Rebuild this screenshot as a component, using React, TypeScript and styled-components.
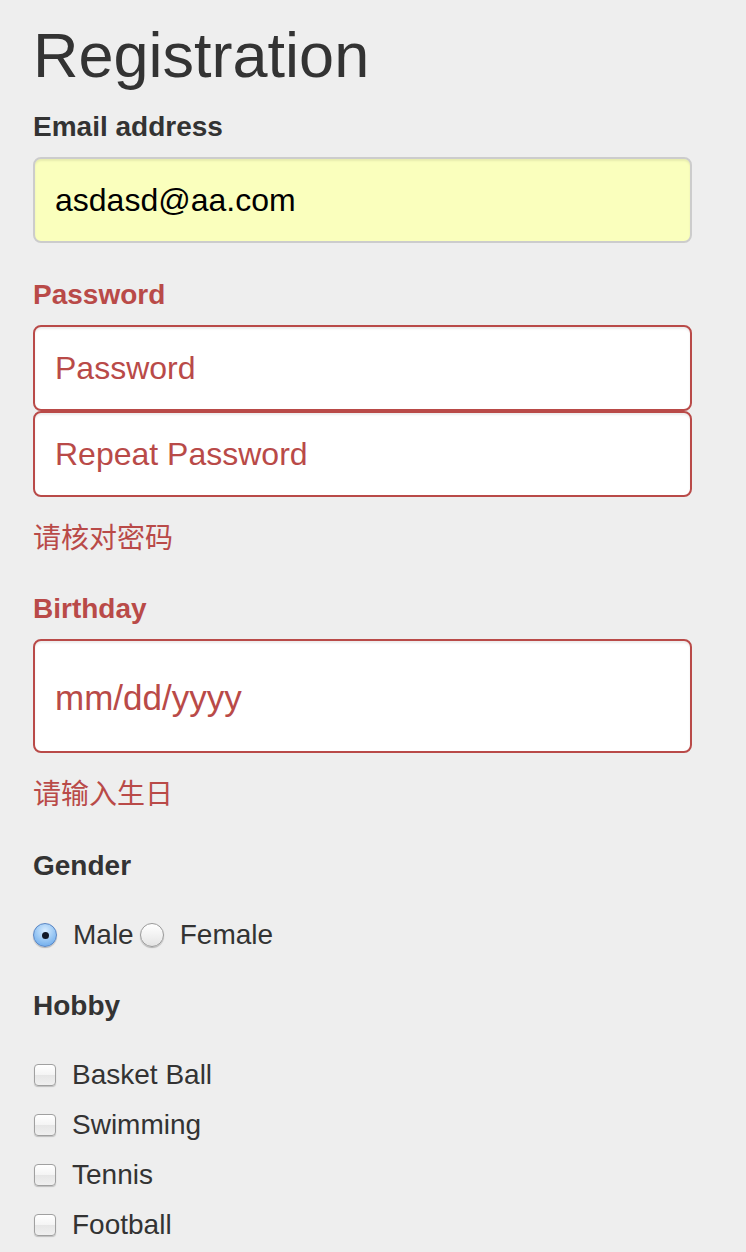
import React from "react";
import styled, { createGlobalStyle } from "styled-components";

const GlobalStyle = createGlobalStyle`
  html, body {
    margin: 0;
    padding: 0;
    background: #eeeeee;
  }
  body {
    font-family: "Liberation Sans", Arial, "Noto Sans CJK SC", sans-serif;
    color: #333333;
  }
  * { box-sizing: border-box; }
`;

const ERR = "#b94a48";

const Page = styled.div`
  width: 659px;
  margin-left: 33px;
  padding-bottom: 20px;
`;

const Title = styled.h1`
  margin: 21px 0 18px;
  font-size: 63px;
  line-height: 68px;
  font-weight: 400;
  color: #333333;
`;

const Group = styled.div<{ $gap?: number }>`
  margin-bottom: ${(p) => (p.$gap ?? 32)}px;
`;

const Label = styled.label<{ $error?: boolean; $mb?: number }>`
  display: block;
  font-size: 28px;
  line-height: 40px;
  font-weight: 700;
  color: ${(p) => (p.$error ? ERR : "#333333")};
  margin-bottom: ${(p) => (p.$mb ?? 10)}px;
`;

const TextInput = styled.input<{ $error?: boolean; $filled?: boolean; $tall?: boolean }>`
  display: block;
  width: 100%;
  height: ${(p) => (p.$tall ? 114 : 86)}px;
  padding: ${(p) => (p.$tall ? "4px 20px 0" : "0 20px")};
  font-family: "Liberation Sans", Arial, sans-serif;
  font-size: ${(p) => (p.$tall ? 35 : 32)}px;
  border-radius: 8px;
  border: 2px solid ${(p) => (p.$error ? ERR : "#cccccc")};
  background: ${(p) => (p.$filled ? "#faffbd" : "#ffffff")};
  color: ${(p) => (p.$filled ? "#000000" : ERR)};
  box-shadow: inset 0 2px 2px rgba(0, 0, 0, 0.075);
  outline: none;
  &::placeholder {
    color: ${ERR};
    opacity: 1;
  }
`;

const Stack = styled.div`
  display: flex;
  flex-direction: column;
`;

const Help = styled.p`
  margin: 22px 0 0;
  font-size: 28px;
  line-height: 40px;
  color: ${ERR};
  font-family: "Liberation Sans", Arial, "Noto Sans CJK SC", sans-serif;
`;

const RadioRow = styled.div`
  display: flex;
  align-items: center;
  height: 40px;
`;

const RadioOption = styled.label`
  display: flex;
  align-items: center;
  font-size: 28px;
  line-height: 40px;
  color: #333333;
  margin-right: 6px;
`;

const Radio = styled.span<{ $checked?: boolean }>`
  display: inline-block;
  position: relative;
  width: 24px;
  height: 24px;
  border-radius: 50%;
  margin-right: 16px;
  border: 1px solid ${(p) => (p.$checked ? "#5a86c4" : "#9a9a9a")};
  background: ${(p) =>
    p.$checked
      ? "radial-gradient(circle at 50% 30%, #d8ecff 0%, #a6cff6 40%, #5ea2ea 100%)"
      : "linear-gradient(#ffffff 0%, #f2f2f2 50%, #e4e4e4 100%)"};
  box-shadow: 0 1px 1px rgba(0, 0, 0, 0.25);
  &::after {
    content: "";
    display: ${(p) => (p.$checked ? "block" : "none")};
    position: absolute;
    left: 50%;
    top: 50%;
    width: 7px;
    height: 7px;
    margin: -3.5px 0 0 -3.5px;
    border-radius: 50%;
    background: #111827;
  }
`;

const CheckList = styled.div`
  display: flex;
  flex-direction: column;
  gap: 10px;
`;

const CheckOption = styled.label`
  display: flex;
  align-items: center;
  font-size: 28px;
  line-height: 40px;
  color: #333333;
`;

const Checkbox = styled.span`
  display: inline-block;
  width: 22px;
  height: 22px;
  margin-left: 1px;
  margin-right: 16px;
  border-radius: 4px;
  border: 1px solid #a0a0a0;
  background: linear-gradient(#ffffff 0%, #f4f4f4 50%, #e6e6e6 51%, #f0f0f0 100%);
  box-shadow: 0 1px 1px rgba(0, 0, 0, 0.2);
`;

const hobbies = ["Basket Ball", "Swimming", "Tennis", "Football"];

export default function App() {
  return (
    <>
      <GlobalStyle />
      <Page>
        <Title>Registration</Title>

        <Group>
          <Label>Email address</Label>
          <TextInput $filled defaultValue="asdasd@aa.com" />
        </Group>

        <Group $gap={30}>
          <Label $error>Password</Label>
          <Stack>
            <TextInput $error type="password" placeholder="Password" />
            <TextInput $error type="password" placeholder="Repeat Password" />
          </Stack>
          <Help>请核对密码</Help>
        </Group>

        <Group $gap={31}>
          <Label $error>Birthday</Label>
          <TextInput $error $tall placeholder="mm/dd/yyyy" />
          <Help>请输入生日</Help>
        </Group>

        <Group $gap={31}>
          <Label $mb={29}>Gender</Label>
          <RadioRow>
            <RadioOption>
              <Radio $checked />
              Male
            </RadioOption>
            <RadioOption>
              <Radio />
              Female
            </RadioOption>
          </RadioRow>
        </Group>

        <Group $gap={0}>
          <Label $mb={29}>Hobby</Label>
          <CheckList>
            {hobbies.map((h) => (
              <CheckOption key={h}>
                <Checkbox />
                {h}
              </CheckOption>
            ))}
          </CheckList>
        </Group>
      </Page>
    </>
  );
}
